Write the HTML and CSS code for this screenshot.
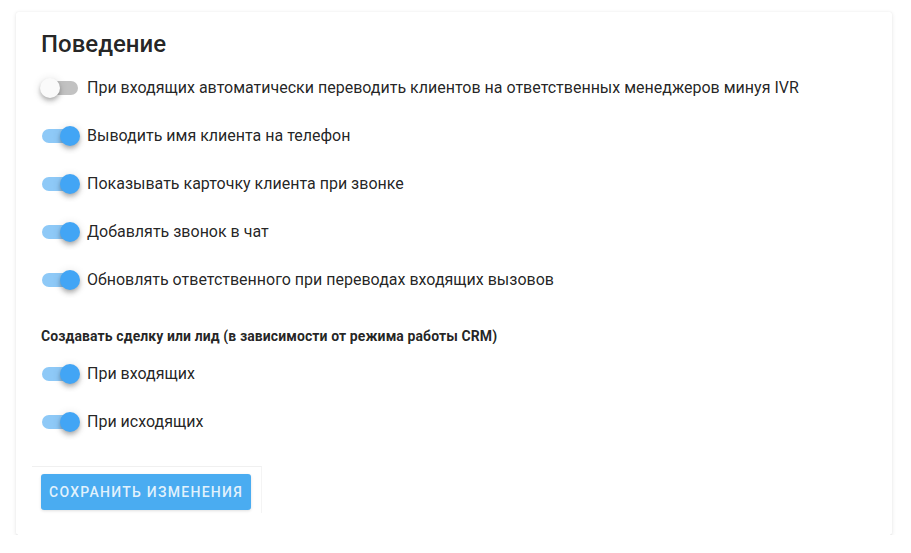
FILE: index.html
```html
<!DOCTYPE html>
<html lang="ru">
<head>
<meta charset="utf-8">
<link rel="stylesheet" href="styles.css">
</head>
<body>
<div class="card">
  <h2 class="title">Поведение</h2>
  <div class="rows">
    <div class="row"><span class="sw"><span class="track"></span><span class="thumb"></span></span><span class="label">При входящих автоматически переводить клиентов на ответственных менеджеров минуя IVR</span></div>
    <div class="row"><span class="sw on"><span class="track"></span><span class="thumb"></span></span><span class="label">Выводить имя клиента на телефон</span></div>
    <div class="row"><span class="sw on"><span class="track"></span><span class="thumb"></span></span><span class="label">Показывать карточку клиента при звонке</span></div>
    <div class="row"><span class="sw on"><span class="track"></span><span class="thumb"></span></span><span class="label">Добавлять звонок в чат</span></div>
    <div class="row"><span class="sw on"><span class="track"></span><span class="thumb"></span></span><span class="label">Обновлять ответственного при переводах входящих вызовов</span></div>
  </div>
  <div class="subhead">Создавать сделку или лид (в зависимости от режима работы CRM)</div>
  <div class="rows">
    <div class="row"><span class="sw on"><span class="track"></span><span class="thumb"></span></span><span class="label">При входящих</span></div>
    <div class="row"><span class="sw on"><span class="track"></span><span class="thumb"></span></span><span class="label">При исходящих</span></div>
  </div>
  <div class="actions">
    <button class="btn">Сохранить изменения</button>
  </div>
</div>
</body>
</html>
```
FILE: styles.css
```css
html, body {
  margin: 0;
  padding: 0;
  background: #fff;
}
body {
  font-family: Roboto, "Liberation Sans", sans-serif;
  color: rgba(0,0,0,0.87);
}
.card {
  margin: 12px 0 0 16px;
  width: 876px;
  height: 523px;
  box-sizing: border-box;
  background: #fff;
  border-radius: 2px;
  box-shadow: 0 2px 1px -1px rgba(0,0,0,0.3), 0 1px 4px 0 rgba(0,0,0,0.10), 0 0 1px rgba(0,0,0,0.1);
  padding: 20px 0 0 16px;
  display: flex;
  flex-direction: column;
}
.title {
  margin: 0 0 0 9px;
  font-size: 24px;
  font-weight: 500;
  line-height: 24px;
  letter-spacing: 0;
  color: rgba(0,0,0,0.87);
}
.rows {
  display: flex;
  flex-direction: column;
  padding-left: 10px;
}
.rows:first-of-type { margin-top: 8px; }
.row {
  height: 48px;
  display: flex;
  align-items: center;
}
.sw {
  position: relative;
  width: 36px;
  height: 20px;
  margin-right: 9px;
  flex: none;
}
.track {
  position: absolute;
  left: 0;
  top: 3px;
  width: 36px;
  height: 14px;
  border-radius: 8px;
  background: rgba(0,0,0,0.24);
}
.thumb {
  position: absolute;
  top: 0;
  left: -2px;
  width: 20px;
  height: 20px;
  border-radius: 50%;
  background: #fafafa;
  box-shadow: 0 2px 4px -1px rgba(0,0,0,0.2), 0 4px 5px 0 rgba(0,0,0,0.14), 0 1px 10px 0 rgba(0,0,0,0.12);
}
.sw.on .track {
  background: #8ec9f7;
}
.sw.on .thumb {
  left: 18px;
  background: #42a5f5;
}
.label {
  font-size: 16px;
  line-height: 20px;
  color: rgba(0,0,0,0.87);
}
.subhead {
  margin: 22px 0 0 9px;
  font-size: 14px;
  font-weight: 700;
  line-height: 20px;
  height: 20px;
  letter-spacing: 0.1px;
}
.subhead + .rows { margin-top: 4px; }
.actions {
  margin-top: 20px;
  width: 230px;
  box-sizing: border-box;
  border-top: 1px solid #f0f0f0;
  border-right: 1px solid #f4f4f4;
  padding: 7px 0 3px 9px;
}
.btn {
  display: block;
  height: 36px;
  padding: 0 8px;
  border: none;
  border-radius: 3px;
  background: #4aacf1;
  color: rgba(255,255,255,0.85);
  font-family: Roboto, "Liberation Sans", sans-serif;
  font-size: 14px;
  font-weight: 500;
  letter-spacing: 1.27px;
  text-transform: uppercase;
  box-shadow: 0 1px 3px rgba(0,0,0,0.12);
}
```
